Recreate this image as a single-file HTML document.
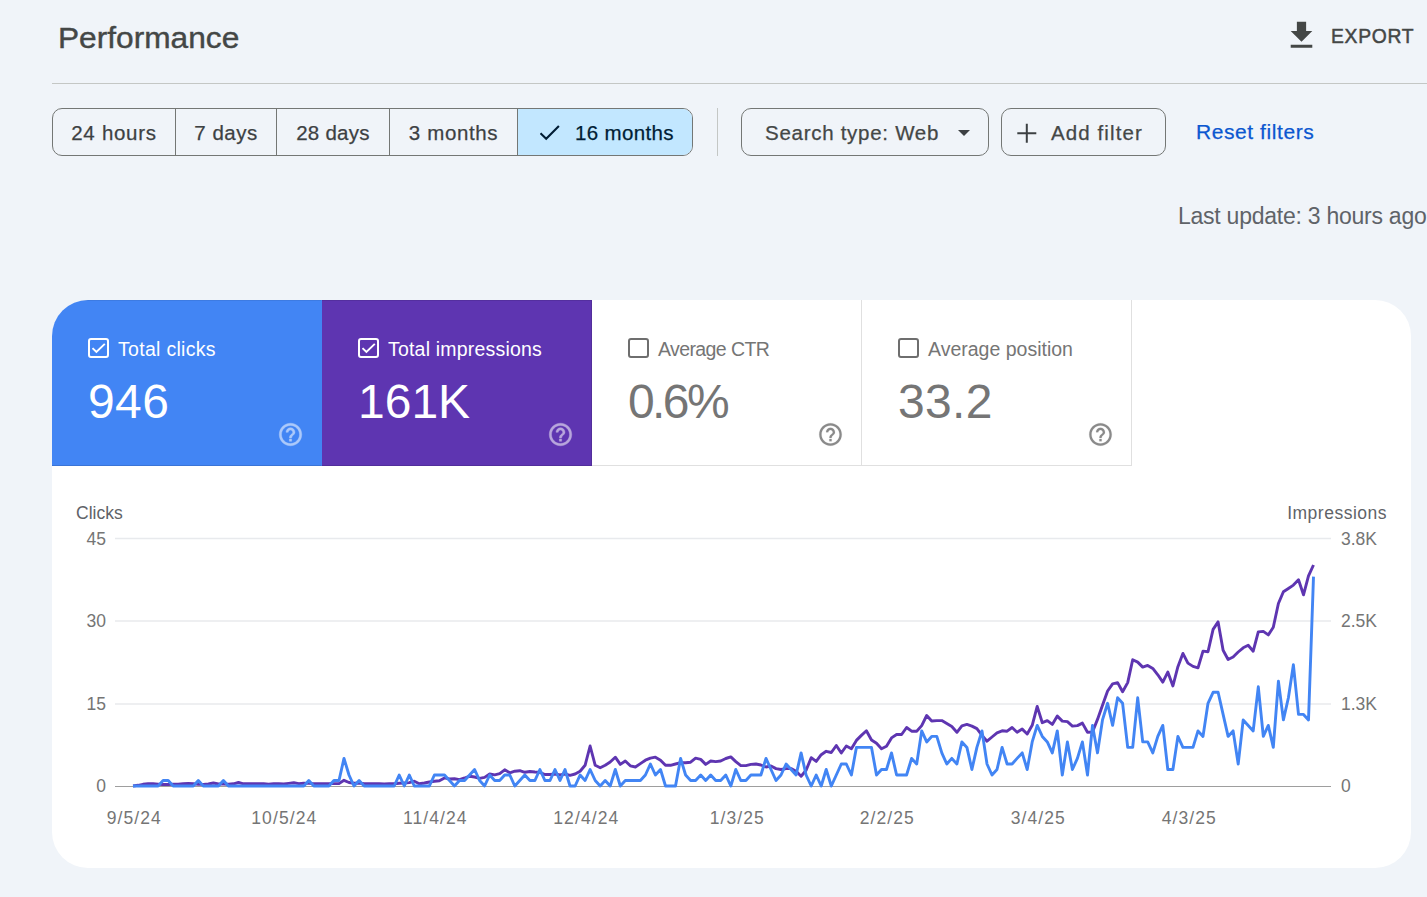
<!DOCTYPE html>
<html lang="en">
<head>
<meta charset="utf-8">
<title>Performance</title>
<style>
*{box-sizing:border-box;margin:0;padding:0}
html,body{width:1427px;height:897px;overflow:hidden;background:#f0f4f9;font-family:"Liberation Sans",sans-serif;color:#3c4043}
.abs{position:absolute;white-space:nowrap}
#title{-webkit-text-stroke:0.4px #444746;left:58px;top:20px;font-size:29px;line-height:36px;color:#444746;transform-origin:0 0;transform:scaleX(1.092)}
#export{left:1331px;top:24px;font-size:21px;line-height:24px;color:#444746;letter-spacing:0.76px;-webkit-text-stroke:0.5px #444746;transform-origin:0 0;transform:scaleX(0.92)}
#exicon{left:1282.5px;top:16.6px;width:37px;height:37px}
#hr{left:52px;top:83px;width:1375px;height:1px;background:#c4c7c5}
#seg{left:52px;top:108px;width:641px;height:48px;border:1px solid #747775;border-radius:10px;overflow:hidden}
#seg div{-webkit-text-stroke:0.25px #444746;position:absolute;top:0;height:46px;line-height:47px;font-size:20.5px;color:#3c4043;text-align:center;border-right:1px solid #747775}
#seg div:last-child{border-right:none}
#vdiv{left:717px;top:108px;width:1px;height:48px;background:#c4c7c5}
.chip{-webkit-text-stroke:0.25px #444746;height:48px;border:1px solid #747775;border-radius:10px;font-size:20.5px;line-height:47px;color:#444746;top:108px}
#reset{left:1196px;top:108px;font-size:21px;line-height:48px;color:#0b57d0;letter-spacing:0.57px;-webkit-text-stroke:0.25px #0b57d0}
#last{left:1178px;top:202px;font-size:23px;line-height:28px;color:#5f6368;letter-spacing:-0.25px}
#card{left:52px;top:300px;width:1359px;height:568px;background:#fff;border-radius:36px;overflow:hidden}
.tile{position:absolute;top:0;height:166px;width:270px;border-right:1px solid rgba(0,0,0,.12);border-bottom:1px solid rgba(0,0,0,.12)}
.tile .lbl{position:absolute;left:66px;top:37px;font-size:19.5px;line-height:24px;white-space:nowrap}
.tile .val{position:absolute;left:36px;top:73.5px;font-size:48px;line-height:56px;white-space:nowrap}
.tile .cb{position:absolute;left:36px;top:38px;width:21px;height:20px}
.tile .help{position:absolute;left:225px;top:121px;width:27px;height:27px}
#t1{left:0;background:#4285f4;color:#fff;border-right-color:transparent;box-shadow:inset 0 1px 0 rgba(0,0,0,.07)}
#t2{left:270px;background:#5e35b1;color:#fff;box-shadow:inset 0 1px 0 rgba(0,0,0,.1)}
#t3{left:540px;color:#757575}
#t4{left:810px;color:#757575}
#chart{left:0;top:480px;width:1427px;height:400px}
#chart text{font-family:"Liberation Sans",sans-serif;font-size:17.5px;fill:#5f6368}
#chart g text{fill:inherit}
</style>
</head>
<body>
<div id="title" class="abs">Performance</div>

<svg id="exicon" class="abs" viewBox="0 0 24 24"><path fill="#444746" d="M19 9h-4V3H9v6H5l7 7 7-7zM5 18v2h14v-2H5z"/></svg>
<div id="export" class="abs">EXPORT</div>
<div id="hr" class="abs"></div>

<div id="seg" class="abs">
  <div style="left:0;width:123px;letter-spacing:0.72px">24 hours</div>
  <div style="left:123px;width:101px;letter-spacing:0.5px">7 days</div>
  <div style="left:224px;width:113px;letter-spacing:0.25px">28 days</div>
  <div style="left:337px;width:128px;letter-spacing:0.62px">3 months</div>
  <div style="left:465px;width:175px;background:#c2e7ff;color:#001d35;text-align:left;padding-left:57px;-webkit-text-stroke:0.25px #001d35;letter-spacing:0.35px">16 months
    <svg style="position:absolute;left:21px;top:12px;width:24px;height:24px" viewBox="0 0 24 24"><path fill="none" stroke="#001d35" stroke-width="2.1" d="M1.5 12.3L7.2 17.8L19.9 4.9"/></svg>
  </div>
</div>
<div id="vdiv" class="abs"></div>

<div class="abs chip" style="left:741px;width:248px;padding-left:23px;letter-spacing:0.72px">Search type: Web
  <svg style="position:absolute;left:215px;top:20px;width:14px;height:8px" viewBox="0 0 14 8"><path fill="#3c4043" d="M1 1h12L7 7z"/></svg>
</div>
<div class="abs chip" style="left:1001px;width:165px;padding-left:49px;letter-spacing:1.1px">Add filter
  <svg style="position:absolute;left:13px;top:12px;width:22px;height:22px" viewBox="0 0 22 22"><path fill="none" stroke="#3c4043" stroke-width="2" d="M11.8 2.7v19M2.3 12.2h19"/></svg>
</div>
<div id="reset" class="abs">Reset filters</div>
<div id="last" class="abs">Last update: 3 hours ago</div>

<div id="card" class="abs">
  <div class="tile" id="t1">
    <svg class="cb" viewBox="0 0 21 20"><rect x="1" y="1" width="19" height="18" rx="2" fill="none" stroke="#fff" stroke-width="2"/><path d="M4.5 10.1L8.4 13.85L16.8 5.85" fill="none" stroke="#fff" stroke-width="2"/></svg>
    <div class="lbl" style="letter-spacing:0.3px">Total clicks</div>
    <div class="val" style="letter-spacing:0.4px">946</div>
    <svg class="help" viewBox="0 0 24 24"><path fill="#fff" stroke="#fff" stroke-width=".4" opacity=".56" d="M11 18h2v-2h-2v2zm1-16C6.48 2 2 6.48 2 12s4.48 10 10 10 10-4.48 10-10S17.52 2 12 2zm0 18c-4.41 0-8-3.59-8-8s3.59-8 8-8 8 3.59 8 8-3.59 8-8 8zm0-14c-2.21 0-4 1.79-4 4h2c0-1.1.9-2 2-2s2 .9 2 2c0 2-3 1.75-3 5h2c0-2.25 3-2.5 3-5 0-2.21-1.79-4-4-4z"/></svg>
  </div>
  <div class="tile" id="t2">
    <svg class="cb" viewBox="0 0 21 20"><rect x="1" y="1" width="19" height="18" rx="2" fill="none" stroke="#fff" stroke-width="2"/><path d="M4.5 10.1L8.4 13.85L16.8 5.85" fill="none" stroke="#fff" stroke-width="2"/></svg>
    <div class="lbl" style="letter-spacing:0.2px">Total impressions</div>
    <div class="val">161K</div>
    <svg class="help" viewBox="0 0 24 24"><path fill="#fff" stroke="#fff" stroke-width=".4" opacity=".56" d="M11 18h2v-2h-2v2zm1-16C6.48 2 2 6.48 2 12s4.48 10 10 10 10-4.48 10-10S17.52 2 12 2zm0 18c-4.41 0-8-3.59-8-8s3.59-8 8-8 8 3.59 8 8-3.59 8-8 8zm0-14c-2.21 0-4 1.79-4 4h2c0-1.1.9-2 2-2s2 .9 2 2c0 2-3 1.75-3 5h2c0-2.25 3-2.5 3-5 0-2.21-1.79-4-4-4z"/></svg>
  </div>
  <div class="tile" id="t3">
    <svg class="cb" viewBox="0 0 21 20"><rect x="1" y="1" width="19" height="18" rx="2" fill="none" stroke="#6e6e6e" stroke-width="2"/></svg>
    <div class="lbl" style="letter-spacing:-0.6px">Average CTR</div>
    <div class="val" style="letter-spacing:-2.6px">0.6%</div>
    <svg class="help" viewBox="0 0 24 24"><path fill="#8a8a8a" stroke="#8a8a8a" stroke-width=".15" d="M11 18h2v-2h-2v2zm1-16C6.48 2 2 6.48 2 12s4.48 10 10 10 10-4.48 10-10S17.52 2 12 2zm0 18c-4.41 0-8-3.59-8-8s3.59-8 8-8 8 3.59 8 8-3.59 8-8 8zm0-14c-2.21 0-4 1.79-4 4h2c0-1.1.9-2 2-2s2 .9 2 2c0 2-3 1.75-3 5h2c0-2.25 3-2.5 3-5 0-2.21-1.79-4-4-4z"/></svg>
  </div>
  <div class="tile" id="t4">
    <svg class="cb" viewBox="0 0 21 20"><rect x="1" y="1" width="19" height="18" rx="2" fill="none" stroke="#6e6e6e" stroke-width="2"/></svg>
    <div class="lbl">Average position</div>
    <div class="val" style="letter-spacing:0.3px">33.2</div>
    <svg class="help" viewBox="0 0 24 24"><path fill="#8a8a8a" stroke="#8a8a8a" stroke-width=".15" d="M11 18h2v-2h-2v2zm1-16C6.48 2 2 6.48 2 12s4.48 10 10 10 10-4.48 10-10S17.52 2 12 2zm0 18c-4.41 0-8-3.59-8-8s3.59-8 8-8 8 3.59 8 8-3.59 8-8 8zm0-14c-2.21 0-4 1.79-4 4h2c0-1.1.9-2 2-2s2 .9 2 2c0 2-3 1.75-3 5h2c0-2.25 3-2.5 3-5 0-2.21-1.79-4-4-4z"/></svg>
  </div>
</div>

<svg id="chart" class="abs" viewBox="0 0 1427 400">
  <g stroke="#e8eaed" stroke-width="1.5">
    <line x1="115" x2="1331" y1="58.5" y2="58.5"/>
    <line x1="115" x2="1331" y1="141" y2="141"/>
    <line x1="115" x2="1331" y1="224" y2="224"/>
  </g>
  <line x1="115" x2="1331" y1="306.5" y2="306.5" stroke="#9e9e9e" stroke-width="1"/>
  <text x="76" y="39">Clicks</text>
  <text x="1387" y="39" text-anchor="end" letter-spacing="0.5">Impressions</text>
  <g text-anchor="end" fill="#757575" style="fill:#757575">
    <text x="106" y="64.5">45</text>
    <text x="106" y="147">30</text>
    <text x="106" y="230">15</text>
    <text x="106" y="312">0</text>
  </g>
  <g style="fill:#757575">
    <text x="1341" y="64.5">3.8K</text>
    <text x="1341" y="147">2.5K</text>
    <text x="1341" y="230">1.3K</text>
    <text x="1341" y="312">0</text>
  </g>
  <g text-anchor="middle" letter-spacing="1.1" style="fill:#757575">
    <text x="134.3" y="343.7">9/5/24</text>
    <text x="284.3" y="343.7">10/5/24</text>
    <text x="435.3" y="343.7">11/4/24</text>
    <text x="586.3" y="343.7">12/4/24</text>
    <text x="737.3" y="343.7">1/3/25</text>
    <text x="887.3" y="343.7">2/2/25</text>
    <text x="1038.3" y="343.7">3/4/25</text>
    <text x="1189.3" y="343.7">4/3/25</text>
  </g>
  <path d="M133.0 306.0 L138.0 305.3 L143.0 304.3 L148.1 303.6 L153.1 303.8 L158.1 304.2 L163.1 304.5 L168.2 304.5 L173.2 304.3 L178.2 304.2 L183.2 303.6 L188.3 303.4 L193.3 303.8 L198.3 304.2 L203.3 304.4 L208.4 304.0 L213.4 303.0 L218.4 304.0 L223.4 304.0 L228.4 304.2 L233.5 303.8 L238.5 302.5 L243.5 303.8 L248.5 303.6 L253.6 303.6 L258.6 303.6 L263.6 303.6 L268.6 304.2 L273.7 303.6 L278.7 303.6 L283.7 304.0 L288.7 303.4 L293.8 302.8 L298.8 303.6 L303.8 303.2 L308.8 303.4 L313.8 303.6 L318.9 303.6 L323.9 303.6 L328.9 303.6 L333.9 303.6 L339.0 303.6 L344.0 300.3 L349.0 302.5 L354.0 303.2 L359.1 303.0 L364.1 303.8 L369.1 303.8 L374.1 303.8 L379.2 303.7 L384.2 303.9 L389.2 303.8 L394.2 303.8 L399.2 303.3 L404.3 303.0 L409.3 302.6 L414.3 301.2 L419.3 303.8 L424.4 303.0 L429.4 302.0 L434.4 301.2 L439.4 300.7 L444.5 297.9 L449.5 299.0 L454.5 298.8 L459.5 299.6 L464.6 298.0 L469.6 296.2 L474.6 297.0 L479.6 298.4 L484.6 297.4 L489.7 294.0 L494.7 294.9 L499.7 293.7 L504.7 289.8 L509.8 292.8 L514.8 291.2 L519.8 290.7 L524.8 292.3 L529.9 291.5 L534.9 292.0 L539.9 292.3 L544.9 294.5 L550.0 294.5 L555.0 294.0 L560.0 295.0 L565.0 294.0 L570.0 295.4 L575.1 294.0 L580.1 291.2 L585.1 285.3 L590.1 266.0 L595.2 285.3 L600.2 287.8 L605.2 285.3 L610.2 282.0 L615.3 277.2 L620.3 284.4 L625.3 281.0 L630.3 285.8 L635.4 287.0 L640.4 283.6 L645.4 280.2 L650.4 278.2 L655.4 277.2 L660.5 280.2 L665.5 285.3 L670.5 285.3 L675.5 284.0 L680.6 282.7 L685.6 282.7 L690.6 282.2 L695.6 278.2 L700.7 279.4 L705.7 284.4 L710.7 281.0 L715.7 281.6 L720.7 281.0 L725.8 278.5 L730.8 276.9 L735.8 281.6 L740.8 285.6 L745.9 285.6 L750.9 284.4 L755.9 284.0 L760.9 285.0 L766.0 287.0 L771.0 286.0 L776.0 288.6 L781.0 289.5 L786.1 288.6 L791.1 288.6 L796.1 291.2 L801.1 296.2 L806.1 290.3 L811.2 277.7 L816.2 281.4 L821.2 274.7 L826.2 271.3 L831.3 272.5 L836.3 265.5 L841.3 273.0 L846.3 266.0 L851.4 268.8 L856.4 260.4 L861.4 255.4 L866.4 250.8 L871.5 260.0 L876.5 263.3 L881.5 268.8 L886.5 266.3 L891.5 257.9 L896.6 254.5 L901.6 254.5 L906.6 247.5 L911.6 251.2 L916.7 251.2 L921.7 245.6 L926.7 235.5 L931.7 241.0 L936.8 240.6 L941.8 240.6 L946.8 243.6 L951.8 246.5 L956.9 252.3 L961.9 245.8 L966.9 244.4 L971.9 246.1 L976.9 248.6 L982.0 255.4 L987.0 261.2 L992.0 257.0 L997.0 252.8 L1002.1 250.8 L1007.1 251.2 L1012.1 247.5 L1017.1 252.3 L1022.2 249.1 L1027.2 254.0 L1032.2 245.3 L1037.2 226.4 L1042.3 242.7 L1047.3 240.7 L1052.3 244.4 L1057.3 236.1 L1062.3 241.1 L1067.4 241.6 L1072.4 246.1 L1077.4 245.6 L1082.4 243.1 L1087.5 252.3 L1092.5 252.0 L1097.5 239.4 L1102.5 225.2 L1107.6 211.0 L1112.6 203.8 L1117.6 202.6 L1122.6 211.8 L1127.7 202.6 L1132.7 179.7 L1137.7 182.1 L1142.7 187.1 L1147.7 185.4 L1152.8 188.4 L1157.8 194.8 L1162.8 202.1 L1167.8 192.1 L1172.9 206.0 L1177.9 186.7 L1182.9 173.4 L1187.9 183.1 L1193.0 186.4 L1198.0 187.8 L1203.0 171.1 L1208.0 171.7 L1213.1 149.4 L1218.1 141.9 L1223.1 170.3 L1228.1 179.5 L1233.1 177.0 L1238.2 172.0 L1243.2 167.8 L1248.2 165.3 L1253.2 171.2 L1258.3 151.9 L1263.3 151.4 L1268.3 154.9 L1273.3 147.3 L1278.4 123.5 L1283.4 111.8 L1288.4 108.5 L1293.4 105.1 L1298.5 99.8 L1303.5 114.8 L1308.5 95.9 L1313.5 85.0" fill="none" stroke="#5e35b1" stroke-width="2.9" stroke-linejoin="round" stroke-linecap="butt"/>
  <path d="M133.0 306.0 L138.0 306.0 L143.0 306.0 L148.1 306.0 L153.1 306.0 L158.1 306.0 L163.1 300.5 L168.2 300.5 L173.2 306.0 L178.2 306.0 L183.2 306.0 L188.3 306.0 L193.3 306.0 L198.3 300.5 L203.3 306.0 L208.4 306.0 L213.4 306.0 L218.4 306.0 L223.4 300.5 L228.4 306.0 L233.5 306.0 L238.5 306.0 L243.5 306.0 L248.5 306.0 L253.6 306.0 L258.6 306.0 L263.6 306.0 L268.6 306.0 L273.7 306.0 L278.7 306.0 L283.7 306.0 L288.7 306.0 L293.8 306.0 L298.8 306.0 L303.8 306.0 L308.8 300.5 L313.8 306.0 L318.9 306.0 L323.9 306.0 L328.9 306.0 L333.9 300.5 L339.0 300.5 L344.0 278.4 L349.0 295.0 L354.0 306.0 L359.1 300.5 L364.1 306.0 L369.1 306.0 L374.1 306.0 L379.2 306.0 L384.2 306.0 L389.2 306.0 L394.2 306.0 L399.2 295.0 L404.3 306.0 L409.3 295.0 L414.3 306.0 L419.3 306.0 L424.4 306.0 L429.4 306.0 L434.4 295.0 L439.4 295.0 L444.5 295.0 L449.5 300.5 L454.5 306.0 L459.5 300.5 L464.6 300.5 L469.6 295.0 L474.6 289.5 L479.6 300.5 L484.6 306.0 L489.7 295.0 L494.7 300.5 L499.7 300.5 L504.7 295.0 L509.8 295.0 L514.8 306.0 L519.8 300.5 L524.8 295.0 L529.9 300.5 L534.9 300.5 L539.9 289.5 L544.9 300.5 L550.0 300.5 L555.0 289.5 L560.0 300.5 L565.0 289.5 L570.0 306.0 L575.1 306.0 L580.1 295.0 L585.1 300.5 L590.1 289.5 L595.2 300.5 L600.2 306.0 L605.2 300.5 L610.2 306.0 L615.3 289.5 L620.3 306.0 L625.3 300.5 L630.3 300.5 L635.4 300.5 L640.4 300.5 L645.4 295.0 L650.4 284.0 L655.4 295.0 L660.5 289.5 L665.5 306.0 L670.5 306.0 L675.5 306.0 L680.6 278.4 L685.6 295.0 L690.6 300.5 L695.6 300.5 L700.7 295.0 L705.7 300.5 L710.7 295.0 L715.7 300.5 L720.7 300.5 L725.8 295.0 L730.8 306.0 L735.8 289.5 L740.8 300.5 L745.9 300.5 L750.9 295.0 L755.9 295.0 L760.9 295.0 L766.0 278.4 L771.0 289.5 L776.0 300.5 L781.0 295.0 L786.1 284.0 L791.1 289.5 L796.1 295.0 L801.1 272.9 L806.1 295.0 L811.2 306.0 L816.2 295.0 L821.2 306.0 L826.2 289.5 L831.3 306.0 L836.3 295.0 L841.3 284.0 L846.3 284.0 L851.4 295.0 L856.4 267.4 L861.4 267.4 L866.4 267.4 L871.5 267.4 L876.5 295.0 L881.5 289.5 L886.5 289.5 L891.5 272.9 L896.6 295.0 L901.6 295.0 L906.6 295.0 L911.6 278.4 L916.7 284.0 L921.7 250.9 L926.7 261.9 L931.7 256.4 L936.8 256.4 L941.8 272.9 L946.8 284.0 L951.8 278.4 L956.9 284.0 L961.9 261.9 L966.9 267.4 L971.9 289.5 L976.9 267.4 L982.0 250.9 L987.0 284.0 L992.0 295.0 L997.0 289.5 L1002.1 267.4 L1007.1 284.0 L1012.1 284.0 L1017.1 278.4 L1022.2 272.9 L1027.2 289.5 L1032.2 261.9 L1037.2 245.4 L1042.3 256.4 L1047.3 261.9 L1052.3 272.9 L1057.3 250.9 L1062.3 295.0 L1067.4 261.9 L1072.4 289.5 L1077.4 278.4 L1082.4 261.9 L1087.5 295.0 L1092.5 245.4 L1097.5 272.9 L1102.5 239.9 L1107.6 223.3 L1112.6 245.4 L1117.6 217.8 L1122.6 223.3 L1127.7 267.4 L1132.7 267.4 L1137.7 217.8 L1142.7 261.9 L1147.7 261.9 L1152.8 272.9 L1157.8 256.4 L1162.8 245.4 L1167.8 289.5 L1172.9 289.5 L1177.9 256.4 L1182.9 267.4 L1187.9 267.4 L1193.0 267.4 L1198.0 250.9 L1203.0 256.4 L1208.0 223.3 L1213.1 212.3 L1218.1 212.3 L1223.1 234.4 L1228.1 256.4 L1233.1 250.9 L1238.2 284.0 L1243.2 239.9 L1248.2 245.4 L1253.2 250.9 L1258.3 206.8 L1263.3 256.4 L1268.3 245.4 L1273.3 267.4 L1278.4 201.3 L1283.4 239.9 L1288.4 217.8 L1293.4 184.8 L1298.5 234.4 L1303.5 234.4 L1308.5 239.9 L1313.5 96.6" fill="none" stroke="#4285f4" stroke-width="2.9" stroke-linejoin="round" stroke-linecap="butt"/>
</svg>
</body>
</html>
